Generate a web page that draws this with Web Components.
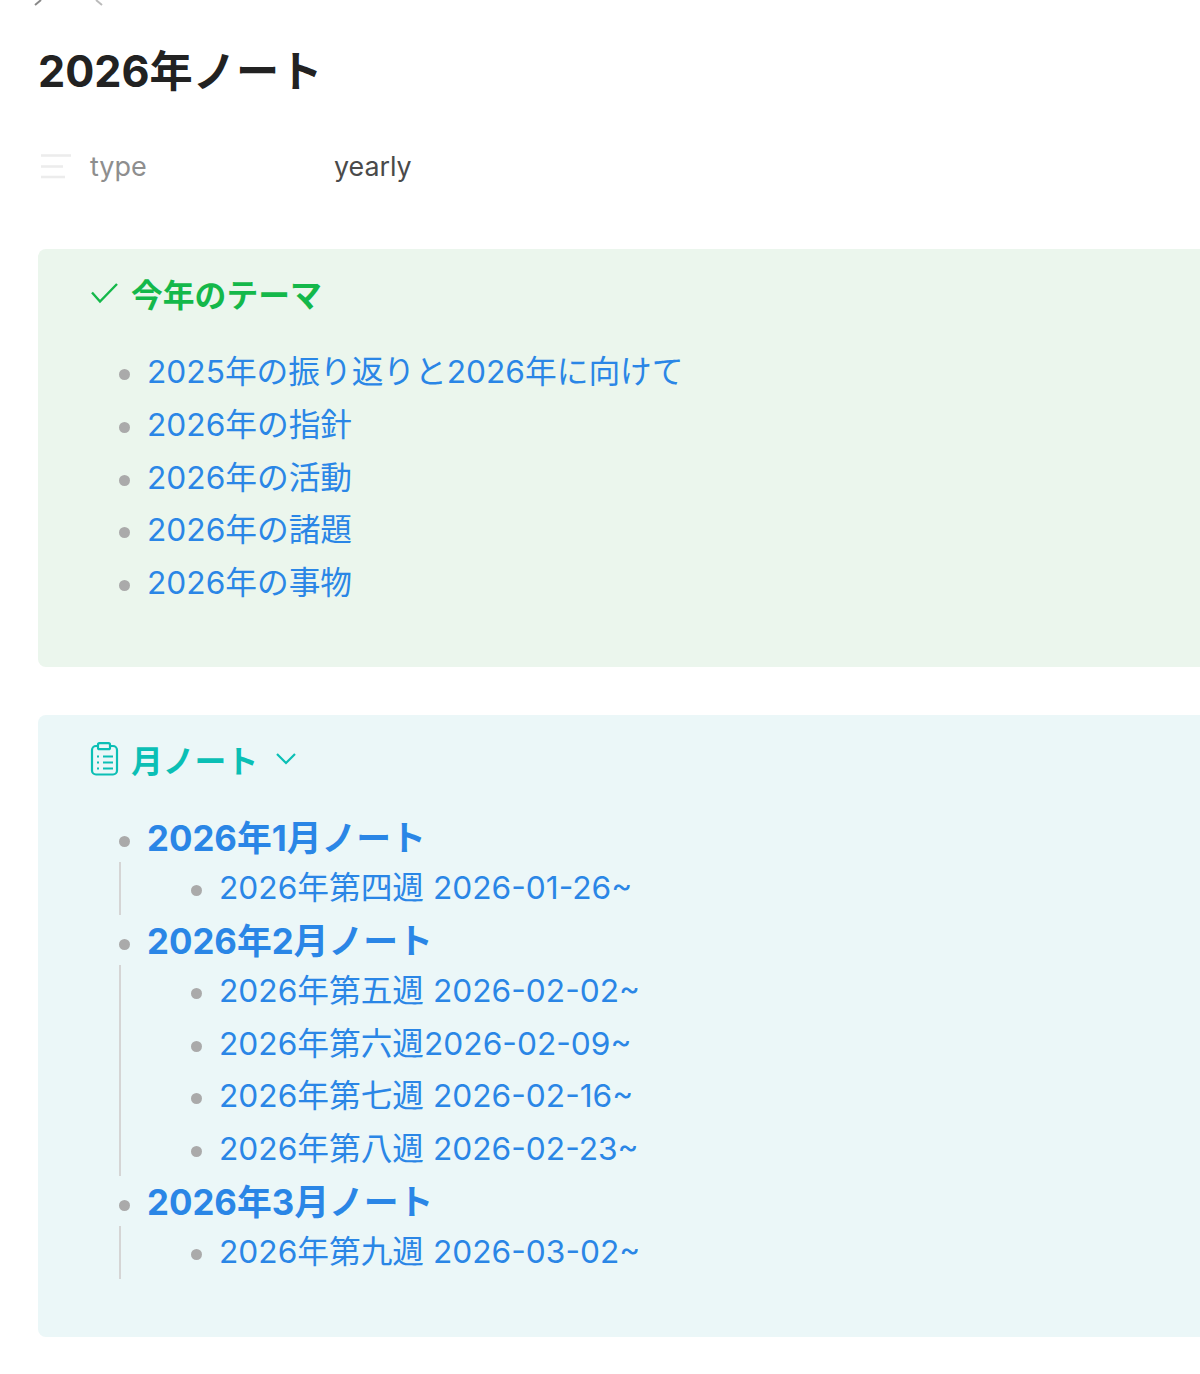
<!DOCTYPE html>
<html><head><meta charset="utf-8"><style>
html,body{margin:0;padding:0;background:#fff;overflow:hidden}
body{font-family:Inter,"Noto Sans CJK JP",sans-serif;height:1374px}
</style></head><body>
<note-page></note-page>
<script>
const F='Inter,"Noto Sans CJK JP",sans-serif';
class NotePage extends HTMLElement{constructor(){super();this.attachShadow({mode:'open'}).innerHTML=`<style>
:host{display:block;padding:0 0 0 38px;font-family:${F}}
.nav{height:6px;display:flex;margin-left:-4px;gap:53px}
h1{margin:0;font-size:43.2px;line-height:60px;font-weight:700;color:#222;padding-top:35px}
.prop{display:flex;align-items:center;height:34px;margin-top:48px;font-size:27px}
.prop svg{width:34px;height:28px;margin-right:18px;flex:none}
.k{width:244px;color:#8e8e8e}.v{color:#4a4a4a;font-size:26.8px}
</style>
<div class="nav"><svg width="8" height="6" viewBox="0 0 8 6"><path d="M7 0L1 5" stroke="#888" stroke-width="2" fill="none"/></svg><svg width="8" height="6" viewBox="0 0 8 6"><path d="M7 0L1 5" transform="matrix(-1 0 0 1 8 0)" stroke="#bbb" stroke-width="2" fill="none"/></svg></div>
<h1>2026年ノート</h1>
<div class="prop"><svg viewBox="0 0 34 28"><path d="M3 3.5H33M3 14.5H25M3 25H27" stroke="#ececec" stroke-width="2.6"/></svg><span class="k">type</span><span class="v">yearly</span></div>
<slot></slot>`}}
customElements.define('note-page',NotePage);
class Callout extends HTMLElement{constructor(){super();this.attachShadow({mode:'open'}).innerHTML=`<style>
:host{display:block;background:var(--bg);border-radius:8px 0 0 8px;box-sizing:border-box;padding:19px 0 0 52px}
.t{display:flex;align-items:center;gap:12px;height:50px;font-weight:700;color:var(--c);font-size:31.8px}
.body{margin-top:28px}
</style><div class="t"><slot name="icon"></slot><slot name="title"></slot><slot name="after"></slot></div><div class="body"><slot></slot></div>`}}
customElements.define('note-callout',Callout);
class Item extends HTMLElement{constructor(){super();this.attachShadow({mode:'open'}).innerHTML=`<style>
:host{display:block;font-size:31.7px;line-height:52.75px;font-weight:400;color:#2a86e6;position:relative;padding-left:57px}
:host::before{content:"";position:absolute;left:29px;top:23px;width:11px;height:11px;border-radius:50%;background:#aaa}
:host([bold]){font-weight:700;font-size:34.8px}
:host([bold])::before{top:24px}
:host([bold]) .l{height:50px;line-height:53px}
.k{font-weight:400;margin-left:-28px;padding-left:41px;border-left:2px solid #d5d5d5}
</style><div class="l"><slot name="label"></slot></div><div class="k"><slot></slot></div>`}
connectedCallback(){if(!this.querySelector('note-item'))this.shadowRoot.querySelector('.k').style.display='none'}}
customElements.define('note-item',Item);
</script>
<script>
const p=document.querySelector('note-page');
const it=(t,kids,b)=>`<note-item ${b?'bold':''}><span slot="label">${t}</span>${(kids||[]).map(k=>it(k)).join('')}</note-item>`;
p.innerHTML=`<note-callout style="--bg:#ebf6ed;--c:#14b84a;height:418px;margin-top:66px">
<svg slot="icon" width="29" height="24" viewBox="0 0 29 24" fill="none"><path d="M2 11.5l8 9L27 3" stroke="#14b84a" stroke-width="2.4"/></svg><span slot="title">今年のテーマ</span>
${['2025年の振り返りと2026年に向けて','2026年の指針','2026年の活動','2026年の諸題','2026年の事物'].map(t=>it(t)).join('')}
</note-callout>
<note-callout style="--bg:#ebf7f8;--c:#0bbfb5;height:622px;margin-top:48px">
<svg slot="icon" width="29" height="34" viewBox="0 0 29 34" fill="none" stroke="#0bbfb5" stroke-width="2.2"><rect x="2" y="4" width="25" height="28.5" rx="4"/><rect x="8" y="1.2" width="12" height="6" rx="1.5" fill="#ebf7f8"/><path d="M7 14.5h2M13 14.5h10M7 20.5h2M13 20.5h10M7 26.5h2M13 26.5h10"/></svg><span slot="title">月ノート</span><svg slot="after" style="margin-left:4px" width="24" height="14" viewBox="0 0 24 14" fill="none"><path d="M3 2l9 9 9-9" stroke="#0bbfb5" stroke-width="2.2"/></svg>
${it('2026年1月ノート',['2026年第四週 2026-01-26~'],1)}
${it('2026年2月ノート',['2026年第五週 2026-02-02~','2026年第六週2026-02-09~','2026年第七週 2026-02-16~','2026年第八週 2026-02-23~'],1)}
${it('2026年3月ノート',['2026年第九週 2026-03-02~'],1)}
</note-callout>`;
</script></body></html>
